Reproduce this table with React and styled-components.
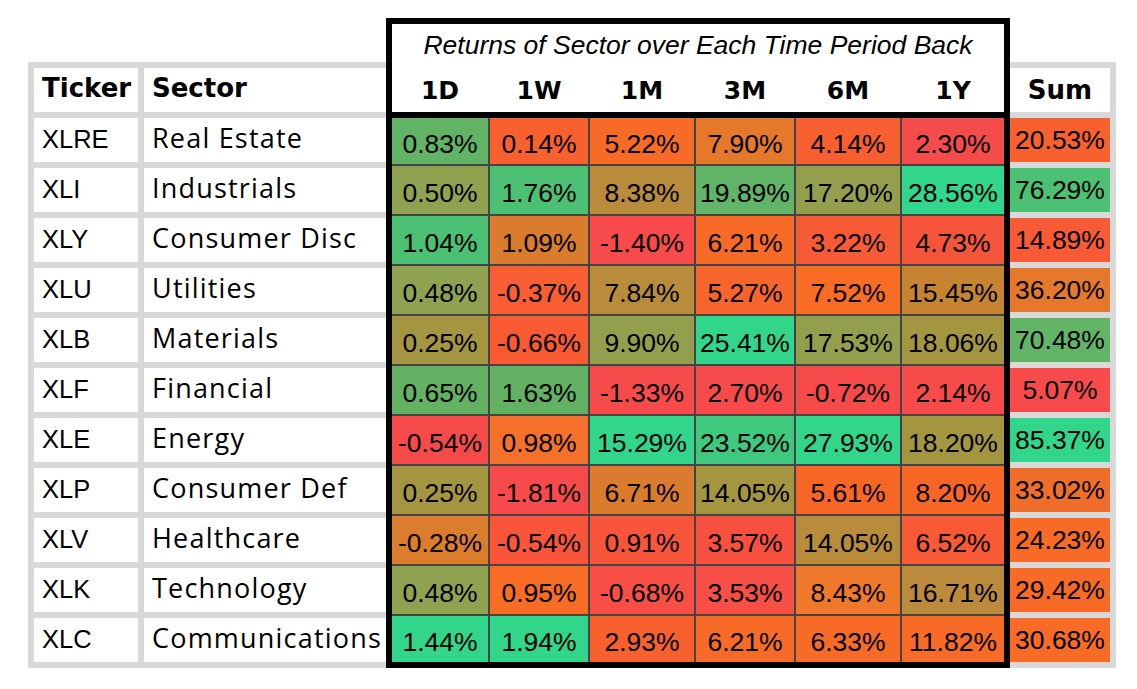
import React from "react";
import styled, { createGlobalStyle } from "styled-components";

const GlobalStyle = createGlobalStyle`
  html, body { margin: 0; padding: 0; background: #ffffff; }
  body { font-family: "Liberation Sans", Arial, sans-serif; }
`;

const COLS = "96px 98px 104px 98px 104px 102px";
const GRAY = "#d9d9d9";

const Page = styled.div`
  display: flex;
  align-items: flex-end;
  padding: 18px 0 0 28px;
`;

const LeftTable = styled.div`
  display: grid;
  grid-template-columns: 104px 242px;
  grid-auto-rows: 44px;
  gap: 6px;
  padding: 6px 0 6px 6px;
  background: ${GRAY};
`;

const HeadCell = styled.div`
  background: #fff;
  display: flex;
  align-items: center;
  justify-content: ${(p) => (p.$center ? "center" : "flex-start")};
  padding: ${(p) => (p.$center ? "0" : "0 0 4px 8px")};
  font-family: "DejaVu Sans", sans-serif;
  font-weight: bold;
  font-size: 26px;
  color: #000;
  box-sizing: border-box;
`;

const TickerCell = styled.div`
  background: #fff;
  padding-left: 8px;
  font-family: "Liberation Sans", Arial, sans-serif;
  font-size: 25.5px;
  line-height: 42px;
  color: #000;
`;

const SectorCell = styled.div`
  background: #fff;
  padding-left: 8px;
  font-family: "Open Sans", sans-serif;
  font-size: 27px;
  letter-spacing: 1.2px;
  line-height: 40px;
  color: #000;
  white-space: nowrap;
  overflow: hidden;
`;

const Returns = styled.div`
  border: 6px solid #000;
  width: 612px;
  background: #fff;
  display: flex;
  flex-direction: column;
`;

const ReturnsHead = styled.div`
  height: 88px;
  border-bottom: 6px solid #000;
  display: flex;
  flex-direction: column;
`;

const Title = styled.div`
  height: 42px;
  line-height: 42px;
  text-align: center;
  font-family: "Liberation Sans", Arial, sans-serif;
  font-style: italic;
  font-size: 26.5px;
  color: #000;
`;

const PeriodRow = styled.div`
  display: grid;
  grid-template-columns: ${COLS};
  column-gap: 2px;
  flex: 1;
`;

const Period = styled.div`
  display: flex;
  align-items: center;
  justify-content: center;
  font-family: "DejaVu Sans", sans-serif;
  font-weight: bold;
  font-size: 25px;
  color: #000;
  padding-top: 2px;
`;

const Grid = styled.div`
  display: grid;
  grid-template-columns: ${COLS};
  grid-template-rows: 46px repeat(9, 48px) 46px;
  gap: 2px;
  background: #444;
`;

const ValueCell = styled.div`
  background: ${(p) => p.$bg};
  display: flex;
  align-items: center;
  justify-content: center;
  padding-top: ${(p) => (p.$sum ? "0" : "6px")};
  box-sizing: border-box;
  font-family: "Liberation Sans", Arial, sans-serif;
  font-size: 26.5px;
  color: #000;
  white-space: nowrap;
  overflow: hidden;
`;

const SumTable = styled.div`
  display: grid;
  grid-template-columns: 100px;
  grid-auto-rows: 44px;
  gap: 6px;
  padding: 6px 6px 6px 0;
  background: ${GRAY};
`;

const PERIODS = ["1D", "1W", "1M", "3M", "6M", "1Y"];

const ROWS = [
  ["XLRE", "Real Estate", [["0.83%", "#61b465"], ["0.14%", "#f8612e"], ["5.22%", "#f86b26"], ["7.90%", "#e6782c"], ["4.14%", "#f75e30"], ["2.30%", "#f44b4b"]], ["20.53%", "#f8602e"]],
  ["XLI", "Industrials", [["0.50%", "#8fa250"], ["1.76%", "#4cc173"], ["8.38%", "#b88c3a"], ["19.89%", "#62b466"], ["17.20%", "#939f4c"], ["28.56%", "#31d68b"]], ["76.29%", "#4cc173"]],
  ["XLY", "Consumer Disc", [["1.04%", "#4cc173"], ["1.09%", "#d97c2e"], ["-1.40%", "#f74b4b"], ["6.21%", "#f86b26"], ["3.22%", "#f75b35"], ["4.73%", "#f7553b"]], ["14.89%", "#f75a35"]],
  ["XLU", "Utilities", [["0.48%", "#8fa250"], ["-0.37%", "#f85e32"], ["7.84%", "#b88c3a"], ["5.27%", "#f5652c"], ["7.52%", "#f86d23"], ["15.45%", "#c68432"]], ["36.20%", "#e6782c"]],
  ["XLB", "Materials", [["0.25%", "#a49641"], ["-0.66%", "#f85a32"], ["9.90%", "#939f4c"], ["25.41%", "#31d68b"], ["17.53%", "#939f4c"], ["18.06%", "#a49641"]], ["70.48%", "#62b466"]],
  ["XLF", "Financial", [["0.65%", "#63b263"], ["1.63%", "#63b263"], ["-1.33%", "#f74b4b"], ["2.70%", "#f74b4b"], ["-0.72%", "#f74b4b"], ["2.14%", "#f74b4b"]], ["5.07%", "#f74b4b"]],
  ["XLE", "Energy", [["-0.54%", "#f74b4b"], ["0.98%", "#f5702a"], ["15.29%", "#31d68b"], ["23.52%", "#3ec97e"], ["27.93%", "#31d68b"], ["18.20%", "#a49641"]], ["85.37%", "#31d68b"]],
  ["XLP", "Consumer Def", [["0.25%", "#a49641"], ["-1.81%", "#f74b4b"], ["6.71%", "#db7b2e"], ["14.05%", "#a49641"], ["5.61%", "#f86626"], ["8.20%", "#f86626"]], ["33.02%", "#f06e2a"]],
  ["XLV", "Healthcare", [["-0.28%", "#dc7d2e"], ["-0.54%", "#f8553a"], ["0.91%", "#f8553a"], ["3.57%", "#f8503f"], ["14.05%", "#b88c3a"], ["6.52%", "#f85a36"]], ["24.23%", "#f86b26"]],
  ["XLK", "Technology", [["0.48%", "#8fa250"], ["0.95%", "#f86d23"], ["-0.68%", "#f74f45"], ["3.53%", "#f74f45"], ["8.43%", "#f0782a"], ["16.71%", "#bb8a3a"]], ["29.42%", "#f86b26"]],
  ["XLC", "Communications", [["1.44%", "#31d68b"], ["1.94%", "#31d68b"], ["2.93%", "#f8612e"], ["6.21%", "#f86b26"], ["6.33%", "#f86b26"], ["11.82%", "#f86b26"]], ["30.68%", "#f86b26"]],
];

export default function App() {
  return (
    <>
      <GlobalStyle />
      <Page>
        <LeftTable>
          <HeadCell>Ticker</HeadCell>
          <HeadCell>Sector</HeadCell>
          {ROWS.map(([t, s]) => (
            <React.Fragment key={t}>
              <TickerCell>{t}</TickerCell>
              <SectorCell>{s}</SectorCell>
            </React.Fragment>
          ))}
        </LeftTable>
        <Returns>
          <ReturnsHead>
            <Title>Returns of Sector over Each Time Period Back</Title>
            <PeriodRow>
              {PERIODS.map((p) => (
                <Period key={p}>{p}</Period>
              ))}
            </PeriodRow>
          </ReturnsHead>
          <Grid>
            {ROWS.map(([t, , vals]) =>
              vals.map(([v, c], i) => (
                <ValueCell key={t + i} $bg={c}>
                  {v}
                </ValueCell>
              ))
            )}
          </Grid>
        </Returns>
        <SumTable>
          <HeadCell $center>Sum</HeadCell>
          {ROWS.map(([t, , , [v, c]]) => (
            <ValueCell key={t} $bg={c} $sum>
              {v}
            </ValueCell>
          ))}
        </SumTable>
      </Page>
    </>
  );
}
